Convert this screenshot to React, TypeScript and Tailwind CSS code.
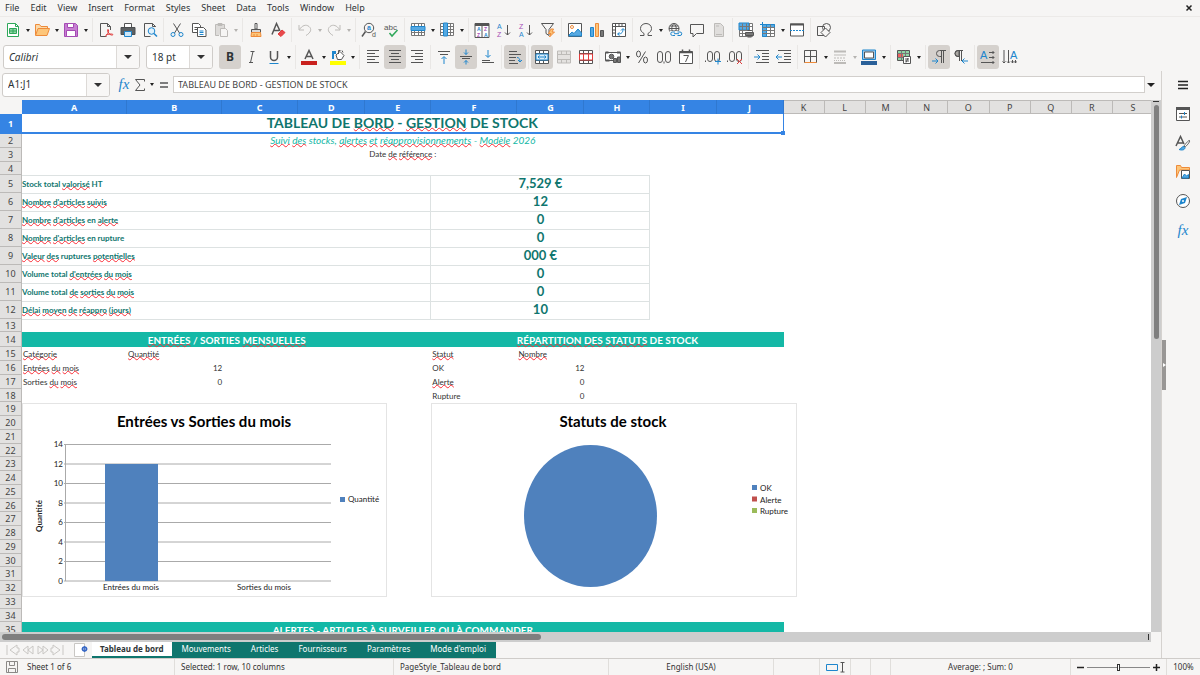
import { useState } from "react";
import type { ReactNode } from "react";

const K = "#555555";
const B = "#1e86cd";
const G = "#bdbbb8";
const R = "#e23b3b";
const O = "#ee8b3a";
const P = "#a54bb4";

function Svg({ children, label }: { children: ReactNode; label?: string }) {
  return (
    <svg
      viewBox="0 0 16 16"
      className="w-4 h-4 shrink-0 overflow-visible"
      fill="none"
      stroke={K}
      strokeWidth="1"
      aria-hidden={label ? undefined : true}
      aria-label={label}
    >
      {children}
    </svg>
  );
}

const T = ({ x, y, s, c = K, w = 400, children }: { x: number; y: number; s: number; c?: string; w?: number; children: string }) => (
  <text x={x} y={y} fontSize={s} fill={c} stroke="none" fontWeight={w} fontFamily="Liberation Sans, sans-serif">
    {children}
  </text>
);

const grid = "M1.5 1.5h13v12h-13zM1.5 4.5h13M1.5 7.5h13M1.5 10.5h13M4.5 1.5v12M8.5 1.5v12M11.5 1.5v12";

const icons: Record<string, ReactNode> = {
  new: (
    <>
      <path d="M2.5 1.5h8l3 3v10h-11z" stroke="#2fa85a" fill="#fff" />
      <path d="M10.5 1.5v3h3" stroke="#2fa85a" />
      <path d="M4.5 6.5h7v5h-7zM4.5 9h7M8 6.5v5" stroke="#2fa85a" fill="#8fd6a5" />
    </>
  ),
  open: (
    <>
      <path d="M1.5 13V2.5h4l1.5 2h6.5V7" stroke={O} fill="#fbd9a8" />
      <path d="M1.5 13.5l2.5-7h11.5l-2.5 7z" stroke={O} fill="#fdc67a" />
    </>
  ),
  save: (
    <>
      <path d="M1.5 1.5h11l2 2v11h-13z" stroke={P} fill="#c77fd2" />
      <path d="M4.5 1.5h6v4h-6z" stroke={P} fill="#fff" />
      <path d="M3.5 8.5h9v6h-9z" stroke={P} fill="#fff" />
    </>
  ),
  pdf: (
    <>
      <path d="M12.5 8V4.5l-3-3h-7v13h6M9.5 1.5v3h3" fill="none" />
      <path d="M7 14.5c3-2 4-5 3.5-6.500s-1.500 0-.5 2 3 3.500 4.500 3-1-2-6.500 0" stroke={R} />
    </>
  ),
  print: (
    <>
      <path d="M4.5 5V1.500h7V5" fill="#fff" />
      <path d="M1 5.500h14v7H1z" fill="#5d6062" stroke="#4b4e50" />
      <path d="M4.5 9.500h7v5h-7z" fill="#cde7f8" stroke={B} />
    </>
  ),
  preview: (
    <>
      <path d="M13.5 5V4.500l-3-3h-8v13h6M10.500 1.500v3h3" />
      <circle cx="9.5" cy="9" r="3.3" stroke={B} fill="#dff0fb" />
      <path d="M12 11.500l3 3" stroke={B} strokeWidth="1.5" />
    </>
  ),
  cut: (
    <>
      <path d="M4.5 1.500l6 9.500M11.500 1.500l-6 9.500" />
      <circle cx="4" cy="12.5" r="2" stroke={B} />
      <circle cx="12" cy="12.5" r="2" stroke={B} />
    </>
  ),
  copy: (
    <>
      <path d="M1.5 1.500h6l2 2v7h-8zM3.500 5.500h4M3.500 7.500h3" fill="#fff" />
      <path d="M6.5 5.500h6l2.500 2.500v6.500h-8.500z" fill="#fff" />
      <path d="M8.5 9h4M8.500 10.500h4M8.500 12.500h4" stroke={B} />
    </>
  ),
  paste: (
    <>
      <path d="M6 13.500H2.500v-11h9V6" stroke={G} fill="#dddbd9" />
      <path d="M5 1.500h4v2H5z" stroke={G} />
      <path d="M7.5 6.500h5l2 2v6h-7z" stroke={G} fill="#f6f5f4" />
    </>
  ),
  brush: (
    <>
      <path d="M7 1.500h2v5.500H7z" fill="#fff" />
      <path d="M3.5 7.500h9v3h-9z" fill="#d8d8d8" />
      <path d="M3.5 10.500h9l.5 4h-10zM6 12v2.500M9 12v2.500" stroke={O} fill="#fdc67a" />
    </>
  ),
  clear: (
    <>
      <path d="M2 12.500L6.500 1.500 10 9M4 8.500h5" strokeWidth="1.5" />
      <path d="M8 12l4-4 3 2.500-4 4z" fill="#e8494c" stroke={R} />
    </>
  ),
  undo: <path d="M2 3v5h5M2.500 7.500C5 3.500 9 2 12 4.500s2 6-3 9" stroke={G} />,
  redo: <path d="M14 3v5H9M13.500 7.500C11 3.500 7 2 4 4.500s-2 6 3 9" stroke={G} />,
  find: (
    <>
      <circle cx="8" cy="6" r="4.7" />
      <path d="M4.5 9.500L1 14.500" strokeWidth="1.5" />
      <T x={6} y={8} s={7} c={B} w={700}>a</T>
      <T x={11} y={15} s={7}>d</T>
    </>
  ),
  spell: (
    <>
      <T x={1} y={8} s={8}>abc</T>
      <path d="M6.5 11l2.500 3 5.500-6" stroke="#2fa85a" strokeWidth="1.5" />
    </>
  ),
  row: (
    <>
      <path d={grid} fill="#fff" stroke="#777" />
      <path d="M1 4.500h14v4H1z" fill="#56a9e2" stroke={B} />
    </>
  ),
  column: (
    <>
      <path d={grid} fill="#fff" stroke="#777" />
      <path d="M4.5 1h4v13h-4z" fill="#56a9e2" stroke={B} />
    </>
  ),
  sort: (
    <>
      <path d="M1 1.500h14v14H1zM8 1.500v14" fill="#fff" />
      <path d="M1 1h14v3H1z" fill={K} stroke="none" />
      <T x={3} y={9} s={5} c={B} w={700}>A</T>
      <T x={3} y={15} s={5} c={P} w={700}>Z</T>
      <T x={10} y={9} s={5} c={P} w={700}>Z</T>
      <T x={10} y={15} s={5} c={B} w={700}>A</T>
    </>
  ),
  asc: (
    <>
      <T x={1} y={7} s={7} c={B}>A</T>
      <T x={1} y={15} s={7} c={P}>Z</T>
      <path d="M11.500 3v10M9 10.500l2.500 2.500 2.500-2.500" />
    </>
  ),
  desc: (
    <>
      <T x={1} y={7} s={7} c={P}>Z</T>
      <T x={1} y={15} s={7} c={B}>A</T>
      <path d="M11.500 3v10M9 10.500l2.500 2.500 2.500-2.500" />
    </>
  ),
  filter: (
    <>
      <path d="M1.500 1.500h12l-4.500 6v6l-3-2v-4z" />
      <path d="M11 7l-2.500 4.500h2.500l-1.500 3.500 5-5h-2.500l1.500-3z" fill="#fdc67a" stroke={O} />
    </>
  ),
  image: (
    <>
      <path d="M1.500 1.500h13v13h-13z" fill="#fff" />
      <circle cx="5" cy="5" r="1.5" stroke={O} />
      <path d="M2 13l3-3 2 1.500 4-4.500 3.500 4v3H2z" fill="#56a9e2" stroke={B} />
    </>
  ),
  chart: (
    <>
      <path d="M1.500 5.500h3v9h-3z" fill="#56a9e2" stroke={B} />
      <path d="M6.500 1.500h3v13h-3z" fill="#fdc67a" stroke={O} />
      <path d="M11.500 8.500h3v6h-3z" fill="#777" />
    </>
  ),
  pivot: (
    <>
      <path d="M1.500 1.500h13v13h-13zM1.500 4.500h13M4.500 1.500v13M8 1.500v3M11 1.500v3M1.500 8h3M1.500 11h3" fill="#fff" />
      <path d="M7 12c4 0 5-2 5-5M10 8.500l2-2 2 2M8.500 10.500l-2 1.500 2 1.500" stroke={B} />
    </>
  ),
  omega: <path d="M2 13.500h4v-2C3.500 10 2.500 8.500 2.500 6.500c0-3 2.500-5 5.500-5s5.500 2 5.500 5c0 2-1 3.500-3.500 5v2h4" />,
  link: (
    <>
      <circle cx="7" cy="6.500" r="5" />
      <path d="M2 6.500h10M7 1.500c-3 3-3 7 0 10M7 1.500c3 3 3 7 0 10M3 4h8M3 9h8" />
      <path d="M3 9h12v6H3z" fill="#f6f5f4" stroke="none" />
      <path d="M8 13.500H5.500a1.700 1.700 0 010-3.500H8M10.500 10H13a1.700 1.700 0 010 3.500h-2.500M7 11.700h5" stroke={B} />
    </>
  ),
  comment: <path d="M1.500 2.500h13v9h-7l-3.500 3.500v-3.500H1.500z" />,
  header: (
    <>
      <path d="M3.500 1.500h6l3 3v10h-9z" stroke={G} fill="#e0dedc" />
      <path d="M5 4h3M5 12.500h6" stroke={G} />
    </>
  ),
  printarea: (
    <>
      <path d="M1.500 1.500h13v13h-13z" fill="#fff" stroke="#777" />
      <path d="M1 1h10v7H1z" fill="#56a9e2" stroke={B} />
      <path d="M1.500 4.500h13M1.500 8.500h13M1.500 11.500h6M4.500 1.500v13M8.500 1.500v7M11.500 1.500v7" stroke="#777" />
      <path d="M7.500 10.500h8v3h-8zM9.500 8.500h4M9.500 15h4" fill="#777" />
    </>
  ),
  freeze: (
    <>
      <path d="M2.500 2.500h12v12h-12z" fill="#fff" stroke="#777" />
      <path d="M2.500 2.500h4v12h-4zM6.500 2.500h8v3h-8z" fill="#56a9e2" stroke={B} />
      <path d="M2.500 5.500h12M2.500 8.500h12M2.500 11.500h12M10.500 2.500v12" stroke="#777" />
      <path d="M0 2.500h5M2.500 0v5" stroke={B} />
    </>
  ),
  split: (
    <>
      <path d="M1.500 2h13v12h-13z" fill="#fff" />
      <path d="M1 1.500h14v2H1z" fill={K} stroke="none" />
      <path d="M1 8.500h14" stroke={B} strokeDasharray="2 1" />
    </>
  ),
  shapes: (
    <>
      <path d="M1.500 4.500h7v9h-7z" />
      <circle cx="10.500" cy="5.500" r="4" />
      <path d="M9.500 6l4.500 4.500-4.500 4.500L5 10.500z" fill="#f6f5f4" />
    </>
  ),
  left: <path d="M2 1.500h12M2 4.500h8M2 7.500h12M2 10.500h8M2 13.500h12" />,
  center: <path d="M2 1.500h12M4 4.500h8M2 7.500h12M4 10.500h8M2 13.500h12" />,
  right: <path d="M2 1.500h12M6 4.500h8M2 7.500h12M6 10.500h8M2 13.500h12" />,
  top: (
    <>
      <path d="M2 2.500h12M4 5.500h8" />
      <path d="M8 15V8M5.500 10L8 7.500l2.500 2.500" stroke={B} />
    </>
  ),
  middle: (
    <>
      <path d="M2 7.500h12M4 9.500h8" />
      <path d="M8 .5v5M6 3.500l2 2 2-2M8 15.500v-4M6 13.500l2-2 2 2" stroke={B} />
    </>
  ),
  bottom: (
    <>
      <path d="M2 11.500h8M2 13.500h12" />
      <path d="M8 1v7M5.500 6L8 8.500 10.500 6" stroke={B} />
    </>
  ),
  wrap: (
    <>
      <path d="M2 2.500h8M2 5.500h12M2 8.500h7M2 11.500h6M2 14.500h9" />
      <path d="M10 8.500c2 0 3 1.500 3 4M11 11l2 2 2-2" stroke={B} />
    </>
  ),
  merge: (
    <>
      <path d="M1.500 1.500h13v13h-13zM1.500 4.500h13M1.500 11.500h13M5.500 1.500v3M9.500 1.500v3M5.500 11.500v3M9.500 11.500v3" fill="#fff" />
      <path d="M2 5h12v6H2z" fill="#d9edf9" stroke={B} />
      <path d="M4 8h8M5.500 6.500L4 8l1.500 1.500M10.500 6.500L12 8l-1.500 1.500" stroke={B} />
    </>
  ),
  mergecells: <path d="M1.500 2h13v12h-13zM1.500 5.500h13M1.500 10.500h13M5.500 2v3.500M10.500 2v3.500M5.500 10.500V14M10.500 10.500V14" stroke={G} fill="#e4e2e0" />,
  unmerge: (
    <>
      <path d="M1.500 1.500h13v13h-13zM1.500 4.500h13M1.500 11.500h13M5.500 1.500v13M10.500 1.500v13" fill="#fff" />
      <path d="M1.500 5h13v6h-13zM5.500 5v6M10.500 5v6" stroke={R} />
    </>
  ),
  currency: (
    <>
      <path d="M.5 3.500h15v8H.5z" fill="#fff" />
      <path d="M.5 3.500h3M12 3.500h3.500M.5 11.500h4" strokeWidth="2" />
      <circle cx="6.500" cy="7.500" r="2.300" fill="#777" />
      <path d="M8.500 9.500h3v4h-3zM12.500 8h3v5.500h-3z" fill="#777" />
    </>
  ),
  percent: (
    <>
      <ellipse cx="4.500" cy="5" rx="2" ry="3" />
      <ellipse cx="11.500" cy="11" rx="2" ry="3" />
      <path d="M11.500 2.500l-7 11.500" />
    </>
  ),
  number: (
    <>
      <rect x="1.500" y="2.500" width="5" height="11" rx="2.500" />
      <rect x="9.500" y="2.500" width="5" height="11" rx="2.500" />
      <path d="M8 12.500v2" />
    </>
  ),
  date: (
    <>
      <path d="M1.500 2.500h13v12h-13z" fill="#fff" />
      <path d="M1.500 3.500h13M4.500 .5v3M11.500 .5v3" strokeWidth="1.500" />
      <path d="M5.500 6.500h5l-3 6.500" />
    </>
  ),
  adddec: (
    <>
      <rect x="2.500" y="2.500" width="5" height="10" rx="2.500" />
      <rect x="9.500" y="2.500" width="5" height="10" rx="2.500" />
      <path d="M.5 11.500v1.500" />
      <path d="M10 12.500h6M13 9.500v6" stroke={B} />
    </>
  ),
  deldec: (
    <>
      <rect x="2.500" y="2.500" width="5" height="10" rx="2.500" />
      <rect x="9.500" y="2.500" width="5" height="10" rx="2.500" />
      <path d="M.5 11.500v1.500" />
      <path d="M10 10l5 5M15 10l-5 5" stroke={R} />
    </>
  ),
  indent: (
    <>
      <path d="M2 1.500h13M8 4.500h7M8 7.500h7M8 10.500h7M2 13.500h13" />
      <path d="M0 8h6M3.500 5.500L6 8l-2.500 2.500" stroke={B} />
    </>
  ),
  outdent: (
    <>
      <path d="M2 1.500h13M8 4.500h7M8 7.500h7M8 10.500h7M2 13.500h13" />
      <path d="M0 8h6M2.500 5.500L0 8l2.500 2.500" stroke={B} />
    </>
  ),
  borders: (
    <>
      <path d="M1.500 1.500h12v12h-12z" />
      <path d="M7.500 1.500v12M1.500 7.500h12" />
      <path d="M1.500 13.500h12" stroke={O} />
    </>
  ),
  linestyle: (
    <>
      <path d="M2 2.500h12" stroke={G} strokeWidth="2" />
      <path d="M2 6h12" stroke={G} />
      <path d="M2 9h12" stroke={G} strokeDasharray="2 1" />
      <path d="M2 11.500h12" stroke={G} strokeDasharray="1 1" />
      <path d="M2 14h12" stroke={G} strokeWidth="2" />
    </>
  ),
  bordercolor: (
    <>
      <path d="M1.500 1h13v9.500h-13z" stroke={B} fill="#9cc9ec" />
      <path d="M3.500 3h9v6h-9z" fill="#fff" />
      <path d="M0 12h16v4H0z" fill="#2a6099" stroke="none" />
    </>
  ),
  conditional: (
    <>
      <path d="M1.500 1.500h12v10h-12z" fill="#8fd6a5" />
      <path d="M2 5h5v3H2z" fill="#f0605f" stroke="none" />
      <path d="M1.500 4.500h12M1.500 8.500h12M5.500 1.500v10M9.500 1.500v10" stroke="#777" />
      <path d="M7.500 7.500h7v7h-7zM9 10h4M9 12h4M12 9l-2 4.500" fill="#fff" />
    </>
  ),
  ltr: (
    <>
      <path d="M15 1.500H8.500a3 3 0 000 6h1.500M10.500 1.500V14M12.500 1.500V14" />
      <path d="M1 12h6M4.500 9.500L7 12l-2.500 2.500" stroke={B} />
    </>
  ),
  rtl: (
    <>
      <path d="M6 1.500H5a3 3 0 000 6h1z" fill="#aaa7a3" />
      <path d="M10 1.500H5a3 3 0 000 6h1M6.500 1.500V12M8.500 1.500V12" />
      <path d="M9 12h6M11.500 9.500L9 12l2.500 2.500" stroke={B} />
    </>
  ),
  texth: (
    <>
      <T x={0} y={10} s={11} c={B}>A</T>
      <path d="M9 3.500h5M12.500 2L14 3.500 12.500 5M9 8.500h5M12.500 7L14 8.500 12.500 10M1 13.500h13M12.500 12l1.500 1.500-1.500 1.500" />
    </>
  ),
  textv: (
    <>
      <T x={8} y={10} s={11} c={B}>A</T>
      <path d="M2 1v13M.5 12.500L2 14l1.500-1.500M6.500 1v13M5 12.500L6.500 14 8 12.500M10.500 11v3M13.500 11v3M9.500 12.500l1 1.500 1-1.500M12.500 12.500l1 1.500 1-1.500" />
    </>
  ),
  italic: <path d="M6.500 2.500h4M5 13.500h4M9 2.500L6.500 13.500" />,
  underline: (
    <>
      <path d="M4.500 2v6a3.500 3.500 0 007 0V2" strokeWidth="1.500" />
      <path d="M3.500 14.500h9" stroke={B} />
    </>
  ),
  fontcolor: (
    <>
      <path d="M4 10L8 1.500 12 10M5.500 7.500h5" strokeWidth="1.500" />
      <path d="M0 12h16v4H0z" fill="#c9211e" stroke="none" />
    </>
  ),
  highlight: (
    <>
      <path d="M2 2h4v3H4v5H2z" fill={B} stroke="none" />
      <path d="M6 6l4-3.500 4 4L11.500 10.500H7.500z" fill="#fff" />
      <path d="M8.500 5V1.500h2M12 1.500l1 2" />
      <path d="M0 12h16v4H0z" fill="#ffff00" stroke="none" />
    </>
  ),
};

function Arrow({ off }: { off?: boolean }) {
  return (
    <button aria-label="More options" className="w-[7px] last:w-2 h-6 flex items-center justify-center">
      <span className={off ? "border-x-2 border-t-[3px] border-x-transparent border-t-[#b5b3b0]" : "border-x-2 border-t-[3px] border-x-transparent border-t-[#222]"} />
    </button>
  );
}

function Tool({ name, label, on }: { name: string; label: string; on?: boolean }) {
  const [active, setActive] = useState(!!on);
  return (
    <button
      aria-label={label}
      title={label}
      aria-pressed={on === undefined ? undefined : active}
      onClick={() => on !== undefined && setActive(!active)}
      className={`w-[22px] h-6 rounded-[3px] flex items-center justify-center ${active ? "bg-[#d5d1cd]" : ""}`}
    >
      {name === "bold" ? <b className="text-[12px] leading-none">B</b> : <Svg>{icons[name]}</Svg>}
    </button>
  );
}

function Group({ children, last }: { children: ReactNode; last?: boolean }) {
  return <div className={last ? "flex" : "flex border-r border-[#e9e7e5] pr-0.5 mr-0.5"}>{children}</div>;
}

function Combo({ label, value, wide, italic }: { label: string; value: string; wide: string; italic?: boolean }) {
  return (
    <div className={`flex h-6 rounded-[3px] border border-[#cfccc9] bg-white overflow-hidden ${wide}`}>
      <input aria-label={label} defaultValue={value} className={`flex-1 min-w-0 px-[5px] text-[10px] text-[#2e3436] ${italic ? "italic" : ""}`} />
      <button aria-label={`${label} list`} className="w-[23px] border-l border-[#dddad7] bg-[#f8f7f6] flex items-center justify-center">
        <span className="border-x-4 border-t-4 border-x-transparent border-t-[#333]" />
      </button>
    </div>
  );
}

const menus = ["File", "Edit", "View", "Insert", "Format", "Styles", "Sheet", "Data", "Tools", "Window", "Help"];

function Toolbars() {
  return (
    <div className="shrink-0">
      <nav className="flex items-center h-[17px] pl-[5px] pr-[7px] gap-[11px] text-[9px] border-b border-[#eceae8]">
        {menus.map((m) => (
          <button key={m}>{m}</button>
        ))}
        <button aria-label="Close document" className="ml-auto">
          <svg viewBox="0 0 8 8" className="w-2 h-2" stroke="#222" strokeWidth="1.500">
            <path d="M1.500 1.500l5 5M6.500 1.500l-5 5" />
          </svg>
        </button>
      </nav>
      <div className="flex items-center h-[26px] pl-0.5">
        <Group>
          <Tool name="new" label="New" /><Arrow />
          <Tool name="open" label="Open" /><Arrow />
          <Tool name="save" label="Save" /><Arrow />
        </Group>
        <Group>
          <Tool name="pdf" label="Export as PDF" />
          <Tool name="print" label="Print" />
          <Tool name="preview" label="Print Preview" />
        </Group>
        <Group>
          <Tool name="cut" label="Cut" />
          <Tool name="copy" label="Copy" />
          <Tool name="paste" label="Paste" /><Arrow off />
        </Group>
        <Group>
          <Tool name="brush" label="Clone Formatting" />
          <Tool name="clear" label="Clear Formatting" />
        </Group>
        <Group>
          <Tool name="undo" label="Undo" /><Arrow off />
          <Tool name="redo" label="Redo" /><Arrow off />
        </Group>
        <Group>
          <Tool name="find" label="Find and Replace" />
          <Tool name="spell" label="Spelling" />
        </Group>
        <Group>
          <Tool name="row" label="Row" /><Arrow />
          <Tool name="column" label="Column" /><Arrow />
        </Group>
        <Group>
          <Tool name="sort" label="Sort" />
          <Tool name="asc" label="Sort Ascending" />
          <Tool name="desc" label="Sort Descending" />
          <Tool name="filter" label="AutoFilter" />
        </Group>
        <Group>
          <Tool name="image" label="Insert Image" />
          <Tool name="chart" label="Insert Chart" />
          <Tool name="pivot" label="Pivot Table" />
        </Group>
        <Group>
          <Tool name="omega" label="Special Character" /><Arrow />
          <Tool name="link" label="Insert Hyperlink" />
          <Tool name="comment" label="Insert Comment" />
          <Tool name="header" label="Headers and Footers" />
        </Group>
        <Group>
          <Tool name="printarea" label="Define Print Area" />
          <Tool name="freeze" label="Freeze Rows and Columns" /><Arrow />
          <Tool name="split" label="Split Window" />
        </Group>
        <Group last>
          <Tool name="shapes" label="Show Draw Functions" />
        </Group>
      </div>
      <div className="flex items-center h-7 pl-[3px]">
        <Combo label="Font Name" value="Calibri" wide="w-[137px]" italic />
        <div className="w-1.5" />
        <Combo label="Font Size" value="18 pt" wide="w-[67px]" />
        <div className="w-1.5" />
        <Group>
          <Tool name="bold" label="Bold" on />
          <Tool name="italic" label="Italic" />
          <Tool name="underline" label="Underline" /><Arrow />
        </Group>
        <Group>
          <Tool name="fontcolor" label="Font Color" /><Arrow />
          <Tool name="highlight" label="Background Color" /><Arrow />
        </Group>
        <Group>
          <Tool name="left" label="Align Left" />
          <Tool name="center" label="Center Horizontally" on />
          <Tool name="right" label="Align Right" />
        </Group>
        <Group>
          <Tool name="top" label="Align Top" />
          <Tool name="middle" label="Center Vertically" on />
          <Tool name="bottom" label="Align Bottom" />
        </Group>
        <Group>
          <Tool name="wrap" label="Wrap Text" on />
        </Group>
        <Group>
          <Tool name="merge" label="Merge and Center" on />
          <Tool name="mergecells" label="Merge Cells" />
          <Tool name="unmerge" label="Unmerge Cells" />
        </Group>
        <Group>
          <Tool name="currency" label="Format as Currency" /><Arrow />
          <Tool name="percent" label="Format as Percent" />
          <Tool name="number" label="Format as Number" />
          <Tool name="date" label="Format as Date" />
        </Group>
        <Group>
          <Tool name="adddec" label="Add Decimal Place" />
          <Tool name="deldec" label="Delete Decimal Place" />
        </Group>
        <Group>
          <Tool name="indent" label="Increase Indent" />
          <Tool name="outdent" label="Decrease Indent" />
        </Group>
        <Group>
          <Tool name="borders" label="Borders" /><Arrow />
          <Tool name="linestyle" label="Border Style" /><Arrow off />
          <Tool name="bordercolor" label="Border Color" /><Arrow />
        </Group>
        <Group>
          <Tool name="conditional" label="Conditional" /><Arrow />
        </Group>
        <Group>
          <Tool name="ltr" label="Left-To-Right" on />
          <Tool name="rtl" label="Right-To-Left" />
        </Group>
        <Group last>
          <Tool name="texth" label="Text direction from left to right" on />
          <Tool name="textv" label="Text direction from top to bottom" />
        </Group>
      </div>
    </div>
  );
}

function Fx() {
  return <span className="font-['Liberation_Serif',serif] italic text-[15px] leading-none text-[#1e86cd]">fx</span>;
}

function FormulaBar() {
  return (
    <div className="flex items-center h-[29px] pl-0.5 pr-1 pb-0.5 shrink-0">
      <Combo label="Name Box" value="A1:J1" wide="w-[108px]" />
      <div className="w-1.5" />
      <button aria-label="Function Wizard" className="w-4 flex justify-center"><Fx /></button>
      <button aria-label="Select Function" className="w-4 flex justify-center">
        <svg viewBox="0 0 12 14" className="w-3 h-3.5" fill="none" stroke={K}>
          <path d="M10.500 3.500v-2h-9L6 7l-4.500 5.500h9v-2" />
        </svg>
      </button>
      <Arrow />
      <button aria-label="Formula" className="w-[18px] flex justify-center">
        <svg viewBox="0 0 8 8" className="w-2 h-2" stroke={K} strokeWidth="1.500">
          <path d="M0 2h8M0 6h8" />
        </svg>
      </button>
      <input
        aria-label="Input line"
        defaultValue="TABLEAU DE BORD - GESTION DE STOCK"
        className="flex-1 min-w-0 h-[17px] px-1 bg-white border border-[#d2cfcc] text-[9px] text-[#444]"
      />
      <button aria-label="Expand Formula Bar" className="w-3 flex justify-center">
        <span className="border-x-4 border-t-4 border-x-transparent border-t-[#222]" />
      </button>
    </div>
  );
}

// column widths in px, A to S
const columns: [string, number][] = [
  ["A", 105], ["B", 95], ["C", 76], ["D", 67], ["E", 66], ["F", 86], ["G", 67], ["H", 66], ["I", 66], ["J", 67],
  ["K", 41], ["L", 41], ["M", 41], ["N", 41], ["O", 42], ["P", 41], ["Q", 41], ["R", 41], ["S", 41],
];

// a word between underscores gets the spell checker's wave
function Spell({ text }: { text: string }) {
  return (
    <>
      {text.split("_").map((part, i) =>
        i % 2 ? (
          <span key={i} className="underline decoration-wavy decoration-red-500 decoration-1 -underline-offset-1 [text-decoration-skip-ink:none]">
            {part}
          </span>
        ) : (
          part
        )
      )}
    </>
  );
}

const kpis = [
  ["Stock total _valorisé_ HT", "7,529 €"],
  ["_Nombre_ _d'articles_ _suivis_", "12"],
  ["_Nombre_ _d'articles_ en _alerte_", "0"],
  ["_Nombre_ _d'articles_ en rupture", "0"],
  ["_Valeur_ _des_ ruptures _potentielles_", "000 €"],
  ["Volume total _d'entrées_ _du_ _mois_", "0"],
  ["Volume total _de_ _sorties_ _du_ _mois_", "0"],
  ["_Délai_ _moyen_ _de_ _réappro_ _(jours)_", "10"],
];

const small = [
  ["_Catégorie_", "_Quantité_", "_Statut_", "_Nombre_"],
  ["_Entrées_ _du_ _mois_", "12", "OK", "12"],
  ["Sorties _du_ _mois_", "0", "_Alerte_", "0"],
  ["", "", "Rupture", "0"],
];

function Row({ n, h, children }: { n: number; h: string; children?: ReactNode }) {
  return (
    <tr className={h}>
      <th
        scope="row"
        className={
          n === 1
            ? "bg-[#3584e4] text-white font-bold border-b border-r border-[#3584e4]"
            : "bg-[#e2e1e0] text-[#444] font-normal border-b border-r border-[#bcbab8]"
        }
      >
        {n}
      </th>
      {children || <td colSpan={19} />}
    </tr>
  );
}

function BarChart() {
  const ticks = [14, 12, 10, 8, 6, 4, 2, 0];
  return (
    <svg className="absolute left-[22px] top-[303px] w-[365px] h-[194px] bg-white font-['Lato',sans-serif]" viewBox="0 0 365 194" fontSize="8" fill="#222">
      <rect x="0.5" y="0.5" width="364" height="193" fill="none" stroke="#e4e4e4" />
      <text x="182" y="24" textAnchor="middle" fontSize="15" fontWeight="700" fill="#000">Entrées vs Sorties du mois</text>
      {ticks.map((t, i) => (
        <g key={t}>
          <line x1="42" x2="309" y1={41.5 + i * 19.5} y2={41.5 + i * 19.5} stroke="#aaa" />
          <text x="41" y={44 + i * 19.5} textAnchor="end">{t}</text>
        </g>
      ))}
      <line x1="43.5" x2="43.5" y1="41" y2="178" stroke="#aaa" />
      <rect x="83" y="61" width="53" height="117" fill="#4f81bd" />
      <text x="109" y="187" textAnchor="middle">Entrées du mois</text>
      <text x="242" y="187" textAnchor="middle">Sorties du mois</text>
      <text transform="translate(20 113) rotate(-90)" textAnchor="middle" fontWeight="700">Quantité</text>
      <rect x="318" y="94" width="5" height="5" fill="#4f81bd" />
      <text x="326" y="99">Quantité</text>
    </svg>
  );
}

function PieChart() {
  const legend = [["OK", "#4f81bd"], ["Alerte", "#c0504d"], ["Rupture", "#9bbb59"]];
  return (
    <svg className="absolute left-[431px] top-[303px] w-[366px] h-[194px] bg-white font-['Lato',sans-serif]" viewBox="0 0 366 194" fontSize="8" fill="#222">
      <rect x="0.5" y="0.5" width="365" height="193" fill="none" stroke="#e4e4e4" />
      <text x="182" y="24" textAnchor="middle" fontSize="15" fontWeight="700" fill="#000">Statuts de stock</text>
      <ellipse cx="159.5" cy="113" rx="66.5" ry="71" fill="#4f81bd" />
      {legend.map(([name, color], i) => (
        <g key={name}>
          <rect x="321" y={82 + i * 11.5} width="5" height="5" fill={color} />
          <text x="329" y={88 + i * 11.5}>{name}</text>
        </g>
      ))}
    </svg>
  );
}

function Sheet() {
  const heights = ["h-3.5", "h-3.5", "h-3.5", "h-[13px]"];
  const kpiBorder = "border-t border-r border-[#dde2e2] pb-0.5!";
  return (
    <div className="relative flex-1 min-h-0 overflow-hidden bg-white">
      <table className="table-fixed border-separate border-spacing-0 w-[1154px] font-['Lato',sans-serif] text-[8px] leading-none text-[#333] [&_td]:p-0 [&_td]:whitespace-nowrap [&_th]:p-0 [&_th]:font-['Noto_Sans',sans-serif] [&_th]:text-[9px]">
        <colgroup>
          <col className="w-[22px]" />
          {columns.map(([name, w]) => (
            <col key={name} style={{ width: w }} />
          ))}
        </colgroup>
        <thead>
          <tr className="h-3.5">
            <td className="bg-[#f6f5f4]" />
            {columns.map(([name], i) => (
              <th
                key={name}
                scope="col"
                className={
                  i < 10
                    ? "bg-[#3584e4] text-white font-bold border-r border-[#2f78d0]"
                    : "bg-[#e2e1e0] text-[#444] font-normal border-r border-y border-[#bcbab8]"
                }
              >
                {name}
              </th>
            ))}
          </tr>
        </thead>
        <tbody>
          <Row n={1} h="h-5">
            <td colSpan={10} className="relative text-center text-[14px] font-bold text-[#0f766e] border-b-2 border-r border-[#3584e4]">
              <Spell text="TABLEAU DE _BORD_ - _GESTION_ DE STOCK" />
              <span className="absolute -right-0.5 -bottom-[3px] w-1 h-1 bg-[#3584e4]" />
            </td>
            <td colSpan={9} />
          </Row>
          <Row n={2} h="h-3.5">
            <td colSpan={10} className="text-center italic text-[10px] text-[#14b8a6] pb-0.5!">
              <Spell text="_Suivi_ _des_ stocks, _alertes_ _et_ _réapprovisionnements_ - _Modèle_ 2026" />
            </td>
            <td colSpan={9} />
          </Row>
          <Row n={3} h="h-3.5">
            <td colSpan={10} className="text-center pb-0.5!"><Spell text="Date _de_ _référence_ :" /></td>
            <td colSpan={9} />
          </Row>
          <Row n={4} h="h-[13px]" />
          {kpis.map(([label, value], i) => (
            <Row key={label} n={i + 5} h="h-[18px]">
              <td colSpan={5} className={`${kpiBorder} font-bold text-[#0f766e]`}><Spell text={label} /></td>
              <td colSpan={3} className={`${kpiBorder} text-center text-[13px] font-bold text-[#0f766e]`}>{value}</td>
              <td colSpan={11} />
            </Row>
          ))}
          <Row n={13} h="h-[13px]">
            <td colSpan={8} className="border-t border-[#dde2e2]" />
            <td colSpan={11} />
          </Row>
          <Row n={14} h="h-[15px]">
            <td colSpan={5} className="bg-[#14b8a6] text-white text-center font-bold text-[10px]">
              <Spell text="_ENTRÉES_ / SORTIES _MENSUELLES_" />
            </td>
            <td colSpan={5} className="bg-[#14b8a6] text-white text-center font-bold text-[10px]">
              <Spell text="_RÉPARTITION_ _DES_ _STATUTS_ DE STOCK" />
            </td>
            <td colSpan={9} />
          </Row>
          {small.map(([a, b, f, g], i) => (
            <Row key={i} n={i + 15} h={heights[i]}>
              <td className="pl-px!"><Spell text={a} /></td>
              <td className={i ? "text-right" : "pl-px!"}><Spell text={b} /></td>
              <td colSpan={3} />
              <td className="pl-px!"><Spell text={f} /></td>
              <td className={i ? "text-right" : "pl-px!"}><Spell text={g} /></td>
              <td colSpan={12} />
            </Row>
          ))}
          {Array.from({ length: 16 }, (_, i) => (
            <Row key={i} n={i + 19} h={heights[i % 4]} />
          ))}
          <Row n={35} h="h-[15px]">
            <td colSpan={10} className="bg-[#14b8a6] text-white text-center font-bold text-[10px]">
              ALERTES - ARTICLES À SURVEILLER OU À COMMANDER
            </td>
            <td colSpan={9} />
          </Row>
        </tbody>
      </table>
      <BarChart />
      <PieChart />
    </div>
  );
}

function TabBar() {
  const tabs = ["Tableau de bord", "Mouvements", "Articles", "Fournisseurs", "Paramètres", "Mode d'emploi"];
  const [current, setCurrent] = useState(tabs[0]);
  const nav: [string, string][] = [
    ["First sheet", "M2 2v10M12 2L5 7l7 5V9h2V5h-2z"],
    ["Previous sheet", "M8 3L3 7l5 4zM13 3L8 7l5 4z"],
    ["Next sheet", "M3 3l5 4-5 4zM8 3l5 4-5 4z"],
    ["Last sheet", "M13 2v10M3 2l7 5-7 5V9H1V5h2z"],
  ];
  return (
    <div className="flex h-4 pl-[5px] text-[8px] shrink-0">
      {nav.map(([label, d]) => (
        <button key={label} aria-label={label} className="w-[15px] flex items-center">
          <svg viewBox="0 0 15 14" className="w-[15px] h-3.5" fill="none" stroke="#c9c7c4">
            <path d={d} />
          </svg>
        </button>
      ))}
      <button aria-label="Add sheet" className="w-[27px] flex items-center justify-end pr-1">
        <svg viewBox="0 0 14 16" className="w-3.5 h-4" fill="none">
          <path d="M.5 1.500h10v13H.5z" fill="#fff" stroke="#c9c7c4" />
          <circle cx="10.5" cy="7" r="2" stroke="#3465c4" strokeWidth="1.5" />
          <path d="M10.500 4v6M7.500 7h6" stroke="#3465c4" strokeWidth=".7" />
        </svg>
      </button>
      {tabs.map((t) => (
        <button
          key={t}
          onClick={() => setCurrent(t)}
          className={
            t === current
              ? "px-2 bg-white font-bold border-b-2 border-[#0f766e]"
              : "px-[10px] bg-[#0f766e] text-white border-b-2 border-[#0f766e]"
          }
        >
          {t}
        </button>
      ))}
    </div>
  );
}

function Sidebar() {
  return (
    <aside className="flex w-[39px] shrink-0 border-b border-[#cfccc9]">
      <div className="w-[5px] flex items-center border-l border-[#d5d2cf]">
        <button aria-label="Hide sidebar" className="w-1 h-[50px] bg-[#999795] flex items-center justify-center">
          <span className="border-y-2 border-l-[3px] border-y-transparent border-l-white" />
        </button>
      </div>
      <div className="flex-1 flex flex-col items-center pt-1 gap-[9px] [&_button]:h-5 [&_button]:flex [&_button]:items-center">
        <button aria-label="Sidebar Settings">
          <svg viewBox="0 0 16 16" className="w-4 h-4" stroke="#222" strokeWidth="1.500">
            <path d="M3 4.500h10M3 8h10M3 11.500h10" />
          </svg>
        </button>
        <button aria-label="Properties">
          <Svg>
            <path d="M1.500 1.500h13v13h-13z" fill="#fff" />
            <path d="M1 1h14v3H1z" fill={K} stroke="none" />
            <path d="M4 7.500h8M4 11h8" />
            <path d="M9.500 6v3M6.500 9.500v3" stroke={B} />
          </Svg>
        </button>
        <button aria-label="Styles">
          <Svg>
            <path d="M1 11L5.500 1.500 9 9M3 8h5" strokeWidth="1.500" />
            <path d="M14.500 5.500c1 1-3 5.500-4.500 6.500l-1-1c1-1.500 4.500-6 5.500-5.500z" fill="#fff" />
            <path d="M4 14.500c2 0 2-3 5-3l1 1c0 2.500-3 3-6 2z" fill="#56a9e2" stroke={B} />
          </Svg>
        </button>
        <button aria-label="Gallery">
          <Svg>
            <path d="M1.500 13.500v-12h4l1 2h8V6H4.500z" fill="#fdc67a" stroke={O} />
            <path d="M6.500 6.500h8v8h-8z" fill="#fff" />
            <path d="M7 14l2.500-4 2 2 2-1.500V14z" fill="#56a9e2" stroke={B} />
          </Svg>
        </button>
        <button aria-label="Navigator">
          <Svg>
            <circle cx="8" cy="8" r="6.500" fill="#fff" />
            <path d="M12 4l-2 6-6 2 2-6z" fill={B} stroke="none" />
            <circle cx="8" cy="8" r="1" fill="#fff" stroke="none" />
          </Svg>
        </button>
        <button aria-label="Functions"><Fx /></button>
      </div>
    </aside>
  );
}

function StatusBar() {
  return (
    <footer className="grid grid-cols-[175fr_219fr_215fr_165fr_46fr_31fr_20fr_20fr_180fr_96fr_33fr] h-4 shrink-0 text-[8px] text-[#333] [&>div]:min-w-0 [&>div]:flex [&>div]:items-center [&>div]:whitespace-nowrap [&>div]:border-r [&>div]:border-[#e0dedb]">
      <div className="pl-1 gap-[7px]">
        <Svg>
          <path d="M2.500 2.500h11v11h-11zM5.500 2.500h5v4h-5zM4.500 9.500h7v4h-7z" stroke="#8b8987" />
        </Svg>
        Sheet 1 of 6
      </div>
      <div className="pl-1.5">Selected: 1 row, 10 columns</div>
      <div className="pl-1.5">PageStyle_Tableau de bord</div>
      <div className="justify-center">English (USA)</div>
      <div />
      <div className="pl-1.5">
        <svg viewBox="0 0 20 12" className="w-5 h-3 shrink-0" fill="none">
          <path d="M.5 3.500h11v6H.5z" stroke={B} />
          <path d="M14.500 1.500h4M14.500 11h4M16.500 1.500V11" stroke={K} />
        </svg>
      </div>
      <div />
      <div />
      <div className="justify-center">Average: ; Sum: 0</div>
      <div className="px-1.5 gap-[3px]">
        <button aria-label="Zoom out" className="shrink-0"><svg viewBox="0 0 7 7" className="w-[7px] h-[7px]" stroke="#222" strokeWidth="1.500"><path d="M0 3.500h7" /></svg></button>
        <input
          type="range"
          aria-label="Zoom"
          defaultValue={50}
          className="flex-1 min-w-0 h-px appearance-none bg-[#888] [&::-webkit-slider-thumb]:appearance-none [&::-webkit-slider-thumb]:w-[3px] [&::-webkit-slider-thumb]:h-[7px] [&::-webkit-slider-thumb]:border [&::-webkit-slider-thumb]:border-[#333] [&::-webkit-slider-thumb]:bg-white"
        />
        <button aria-label="Zoom in" className="shrink-0"><svg viewBox="0 0 7 7" className="w-[7px] h-[7px]" stroke="#222" strokeWidth="1.500"><path d="M0 3.500h7M3.500 0v7" /></svg></button>
      </div>
      <div className="justify-center border-r-0!">100%</div>
    </footer>
  );
}

export default function App() {
  return (
    <div className="h-screen flex flex-col overflow-hidden bg-[#f6f5f4] text-[#2e3436] font-['Noto_Sans',sans-serif]">
      <Toolbars />
      <div className="flex flex-1 min-h-0">
        <main className="flex-1 min-w-0 flex flex-col border-b border-[#cfccc9]">
          <FormulaBar />
          <div className="flex flex-1 min-h-0">
            <div className="flex-1 min-w-0 flex flex-col">
              <Sheet />
              <div className="h-2.5 shrink-0 bg-[#cdcdcd] px-0.5 flex items-center justify-between">
                <div className="w-[47%] h-1.5 rounded-full bg-[#7f7f7f]" />
                <div className="w-px h-1.5 bg-[#333]" />
              </div>
            </div>
            <div className="w-2.5 shrink-0 bg-[#cdcdcd] flex flex-col items-center mb-2.5">
              <div className="w-1.5 h-px bg-[#333] mt-px mb-[3px]" />
              <div className="w-[5px] h-[44%] rounded-full bg-[#7f7f7f]" />
            </div>
          </div>
          <TabBar />
        </main>
        <Sidebar />
      </div>
      <StatusBar />
    </div>
  );
}
